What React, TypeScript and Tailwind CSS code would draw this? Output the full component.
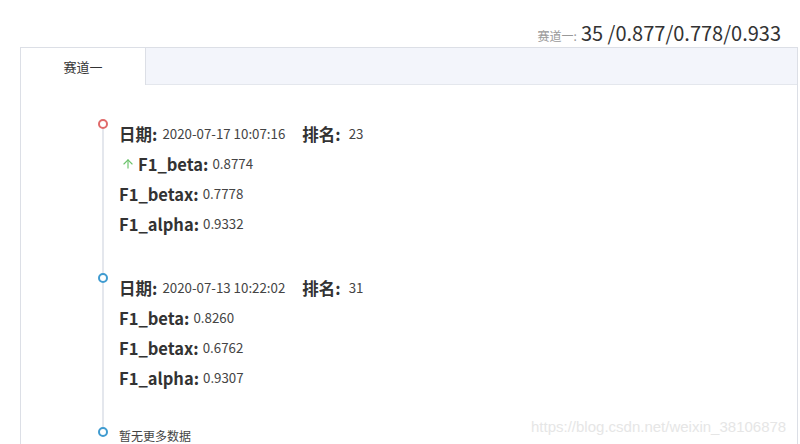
import React from 'react'
import { ArrowUp } from 'lucide-react'

type Record = {
  date: string
  rank: number
  up?: boolean
  dot: string
  metrics: { label: string; value: string }[]
}

const RECORDS: Record[] = [
  {
    date: '2020-07-17 10:07:16',
    rank: 23,
    up: true,
    dot: 'border-[#e06a6a]',
    metrics: [
      { label: 'F1_beta', value: '0.8774' },
      { label: 'F1_betax', value: '0.7778' },
      { label: 'F1_alpha', value: '0.9332' },
    ],
  },
  {
    date: '2020-07-13 10:22:02',
    rank: 31,
    dot: 'border-[#3f9bd0]',
    metrics: [
      { label: 'F1_beta', value: '0.8260' },
      { label: 'F1_betax', value: '0.6762' },
      { label: 'F1_alpha', value: '0.9307' },
    ],
  },
]

const Dot = ({ className }: { className: string }) => (
  <span className={`block h-[10px] w-[10px] shrink-0 rounded-full border-2 bg-white ${className}`} />
)

export default function App() {
  return (
    <div className="relative h-[444px] w-[800px] overflow-hidden bg-white font-['Noto_Sans_CJK_SC',sans-serif] text-[#333]">
      <div className="flex h-[47px] items-start justify-end pr-[19px] pt-[19px]">
        <span className="flex items-baseline leading-[28px]">
          <span className="mr-[4px] text-[12px] text-[#999]">赛道一:</span>
          <span className="text-[20px] text-[#333]">35 /0.877/0.778/0.933</span>
        </span>
      </div>

      <div className="ml-[20px] mr-[2px] h-[400px] border border-[#dcdfe6]">
        <div className="flex h-[37px] border-b border-[#e4e7ed] bg-[#f3f5fb]">
          <div className="flex h-[37px] w-[125px] items-center justify-center border-r border-[#dcdfe6] bg-white text-[13px] text-[#333]">
            赛道一
          </div>
        </div>

        <div className="pl-[77px] pt-[34px]">
          {RECORDS.map((rec) => (
            <div key={rec.date} className="flex">
              <div className="flex w-[10px] flex-col items-center">
                <Dot className={rec.dot} />
                <span className="block w-[2px] flex-1 bg-[#e4e7ed]" />
              </div>
              <div className="ml-[11px] pb-[34px]">
                <div className="flex h-[30px] items-center">
                  <span className="text-[16.5px] font-bold">日期:</span>
                  <span className="ml-[5px] text-[13.3px] text-[#444]">{rec.date}</span>
                  <span className="ml-[17px] text-[16.5px] font-bold">排名:</span>
                  <span className="ml-[8px] text-[13.3px] text-[#444]">{rec.rank}</span>
                </div>
                {rec.metrics.map((m, j) => (
                  <div key={m.label} className="flex h-[30px] items-center">
                    {rec.up && j === 0 && (
                      <ArrowUp size={14} strokeWidth={2} className="ml-[2px] mr-[3px] text-[#6cc36c]" />
                    )}
                    <span className="text-[16.5px] font-bold">{m.label}:</span>
                    <span className="ml-[4px] text-[13.3px] text-[#444]">{m.value}</span>
                  </div>
                ))}
              </div>
            </div>
          ))}
          <div className="flex">
            <Dot className="border-[#3f9bd0]" />
            <span className="ml-[11px] mt-[1px] text-[12px] leading-[16px] text-[#444]">暂无更多数据</span>
          </div>
        </div>
      </div>

      <span className="absolute left-[531px] top-[416px] font-['Liberation_Sans',sans-serif] text-[15px] text-[#e6e6e6]">
        https://blog.csdn.net/weixin_38106878
      </span>
    </div>
  )
}
